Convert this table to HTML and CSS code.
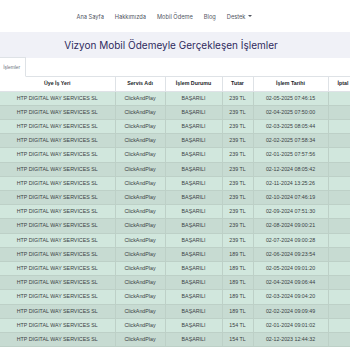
FILE: index.html
```html
<!DOCTYPE html>
<html lang="tr">
<head>
<meta charset="utf-8">
<title>Vizyon Mobil Ödeme İşlemleri</title>
<link rel="stylesheet" href="styles.css">
</head>
<body>
<nav class="topnav">
  <a class="nav-link" href="#">Ana Sayfa</a>
  <a class="nav-link" href="#">Hakkımızda</a>
  <a class="nav-link" href="#">Mobil Ödeme</a>
  <a class="nav-link" href="#">Blog</a>
  <a class="nav-link dropdown" href="#">Destek <span class="caret"></span></a>
</nav>
<header class="hero">
  <h1 class="hero-title">Vizyon Mobil Ödemeyle Gerçekleşen İşlemler</h1>
</header>
<div class="tabs">
  <span class="tab active">İşlemler</span>
</div>
<div class="table-wrap">
<table class="tx-table">
  <colgroup>
    <col class="c1"><col class="c2"><col class="c3"><col class="c4"><col class="c5"><col class="c6">
  </colgroup>
  <thead>
    <tr><th>Üye İş Yeri</th><th>Servis Adı</th><th>İşlem Durumu</th><th>Tutar</th><th>İşlem Tarihi</th><th>İptal</th></tr>
  </thead>
  <tbody>
    <tr><td>HTP DIGITAL WAY SERVICES SL</td><td>ClickAndPlay</td><td>BAŞARILI</td><td>239 TL</td><td>02-05-2025 07:46:15</td><td></td></tr>
    <tr><td>HTP DIGITAL WAY SERVICES SL</td><td>ClickAndPlay</td><td>BAŞARILI</td><td>239 TL</td><td>02-04-2025 07:50:00</td><td></td></tr>
    <tr><td>HTP DIGITAL WAY SERVICES SL</td><td>ClickAndPlay</td><td>BAŞARILI</td><td>239 TL</td><td>02-03-2025 08:05:44</td><td></td></tr>
    <tr><td>HTP DIGITAL WAY SERVICES SL</td><td>ClickAndPlay</td><td>BAŞARILI</td><td>239 TL</td><td>02-02-2025 07:58:34</td><td></td></tr>
    <tr><td>HTP DIGITAL WAY SERVICES SL</td><td>ClickAndPlay</td><td>BAŞARILI</td><td>239 TL</td><td>02-01-2025 07:57:56</td><td></td></tr>
    <tr><td>HTP DIGITAL WAY SERVICES SL</td><td>ClickAndPlay</td><td>BAŞARILI</td><td>239 TL</td><td>02-12-2024 08:05:42</td><td></td></tr>
    <tr><td>HTP DIGITAL WAY SERVICES SL</td><td>ClickAndPlay</td><td>BAŞARILI</td><td>239 TL</td><td>02-11-2024 13:25:26</td><td></td></tr>
    <tr><td>HTP DIGITAL WAY SERVICES SL</td><td>ClickAndPlay</td><td>BAŞARILI</td><td>239 TL</td><td>02-10-2024 07:46:19</td><td></td></tr>
    <tr><td>HTP DIGITAL WAY SERVICES SL</td><td>ClickAndPlay</td><td>BAŞARILI</td><td>239 TL</td><td>02-09-2024 07:51:30</td><td></td></tr>
    <tr><td>HTP DIGITAL WAY SERVICES SL</td><td>ClickAndPlay</td><td>BAŞARILI</td><td>239 TL</td><td>02-08-2024 09:00:21</td><td></td></tr>
    <tr><td>HTP DIGITAL WAY SERVICES SL</td><td>ClickAndPlay</td><td>BAŞARILI</td><td>239 TL</td><td>02-07-2024 09:00:28</td><td></td></tr>
    <tr><td>HTP DIGITAL WAY SERVICES SL</td><td>ClickAndPlay</td><td>BAŞARILI</td><td>189 TL</td><td>02-06-2024 09:23:54</td><td></td></tr>
    <tr><td>HTP DIGITAL WAY SERVICES SL</td><td>ClickAndPlay</td><td>BAŞARILI</td><td>189 TL</td><td>02-05-2024 09:01:20</td><td></td></tr>
    <tr><td>HTP DIGITAL WAY SERVICES SL</td><td>ClickAndPlay</td><td>BAŞARILI</td><td>189 TL</td><td>02-04-2024 09:06:44</td><td></td></tr>
    <tr><td>HTP DIGITAL WAY SERVICES SL</td><td>ClickAndPlay</td><td>BAŞARILI</td><td>189 TL</td><td>02-03-2024 09:04:20</td><td></td></tr>
    <tr><td>HTP DIGITAL WAY SERVICES SL</td><td>ClickAndPlay</td><td>BAŞARILI</td><td>189 TL</td><td>02-02-2024 09:09:49</td><td></td></tr>
    <tr><td>HTP DIGITAL WAY SERVICES SL</td><td>ClickAndPlay</td><td>BAŞARILI</td><td>154 TL</td><td>02-01-2024 09:01:02</td><td></td></tr>
    <tr><td>HTP DIGITAL WAY SERVICES SL</td><td>ClickAndPlay</td><td>BAŞARILI</td><td>154 TL</td><td>02-12-2023 12:44:32</td><td></td></tr>
  </tbody>
</table>
</div>
</body>
</html>
```
FILE: styles.css
```css
html, body {
  margin: 0;
  padding: 0;
  background: #ffffff;
  overflow: hidden;
}
body {
  font-family: "Liberation Sans", Arial, sans-serif;
  color: #212529;
}
.topnav {
  height: 32px;
  display: flex;
  align-items: center;
  justify-content: center;
  gap: 11px;
  padding-right: 21px;
  background: #ffffff;
}
.nav-link {
  font-family: Inter, "Noto Sans", sans-serif;
  font-size: 5.7px;
  color: #50555f;
  text-decoration: none;
  display: flex;
  align-items: center;
  gap: 3px;
}
.caret {
  width: 0;
  height: 0;
  border-left: 2px solid transparent;
  border-right: 2px solid transparent;
  border-top: 2px solid #50555f;
}
.hero {
  height: 26px;
  background: #f0f1f7;
  display: flex;
  align-items: center;
  justify-content: center;
  padding-right: 8px;
}
.hero-title {
  margin: 0;
  font-family: Inter, "Noto Sans", sans-serif;
  font-weight: 400;
  font-size: 10px;
  color: #2f2b5e;
}
.tabs {
  height: 19px;
  display: flex;
  align-items: flex-end;
  border-bottom: 1px solid #dee2e6;
  box-sizing: border-box;
}
.tab {
  font-size: 4.8px;
  color: #6c757d;
  padding: 0 5px 0 0;
  height: 18px;
  width: 20px;
  display: flex;
  align-items: center;
  justify-content: flex-end;
  background: #ffffff;
  border: 1px solid #dee2e6;
  border-left: none;
  border-bottom-color: #ffffff;
  margin-bottom: -1px;
}
.table-wrap {
  width: 100%;
  overflow: hidden;
}
.tx-table {
  width: 358px;
  table-layout: fixed;
  border-collapse: collapse;
  font-size: 5.3px;
}
.c1 { width: 115px; }
.c2 { width: 50px; }
.c3 { width: 57px; }
.c4 { width: 31px; }
.c5 { width: 75px; }
.c6 { width: 30px; }
.tx-table th,
.tx-table td {
  padding: 0 2px;
  text-align: center;
  white-space: nowrap;
  overflow: hidden;
  border-right: 1px solid #dee2e6;
  border-bottom: 1px solid #dee2e6;
}
.tx-table th {
  line-height: 13.6px;
  font-weight: 700;
  color: #212529;
  background: #ffffff;
}
.tx-table td {
  line-height: 13.2px;
  color: #3a3f44;
  background: #d1e7dd;
  border-right-color: #bdd0c7;
  border-bottom-color: #bdd0c7;
}
.tx-table tbody tr:nth-child(even) td {
  background: #c7dbd2;
}
```
